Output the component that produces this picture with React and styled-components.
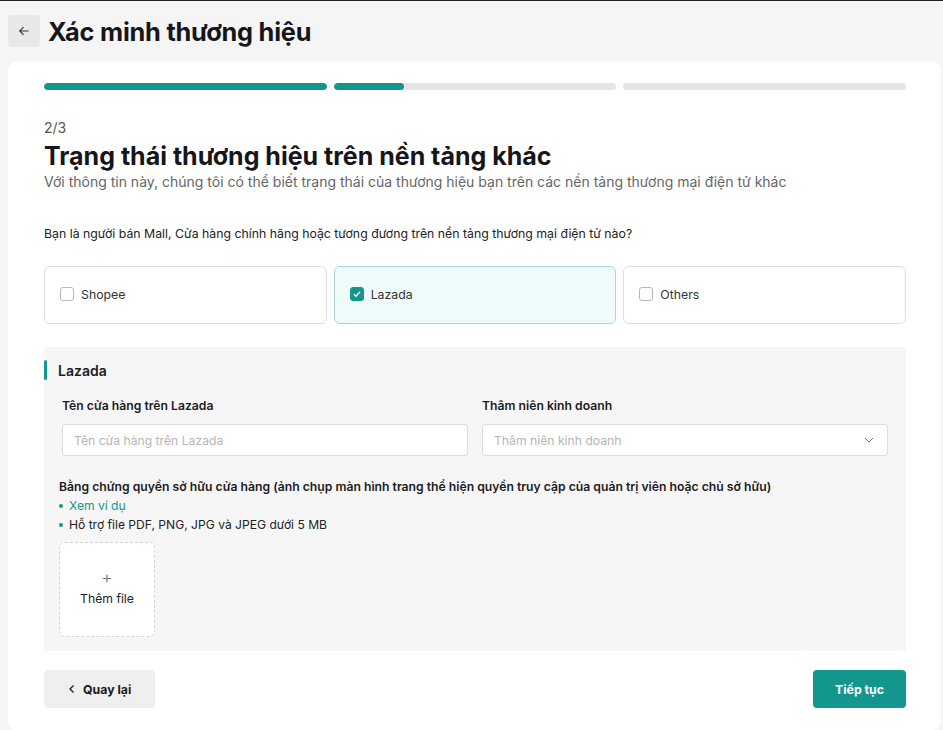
import { useState } from 'react';
import styled, { createGlobalStyle } from 'styled-components';

const GlobalStyle = createGlobalStyle`
    html, body {
        margin: 0;
        padding: 0;
        background: #f5f5f6;
        font-family: Inter, "Noto Sans", sans-serif;
        color: #1c1c1e;
    }
    * { box-sizing: border-box; }
`

const Page = styled.div`
    min-height: 730px;
    border-top: 1px solid #222;
    padding: 14px 2px 0 8px;
    display: flex;
    flex-direction: column;
    gap: 15px;
`
const TopBar = styled.div`
    display: flex;
    align-items: center;
    gap: 8px;
`
const BackButton = styled.button`
    width: 32px;
    height: 32px;
    border: none;
    border-radius: 4px;
    background: #e8e8e8;
    display: flex;
    align-items: center;
    justify-content: center;
    color: #333;
    padding: 0;
    cursor: pointer;
`
const PageTitle = styled.h1`
    margin: 0;
    font-size: 25.3px;
    font-weight: 700;
    letter-spacing: -0.2px;
    color: #16161a;
`
const Card = styled.div`
    background: #fff;
    border-radius: 8px;
    padding: 21px 35px 20px 36px;
    flex: 1;
`
const Steps = styled.div`
    display: grid;
    grid-template-columns: repeat(3, 1fr);
    gap: 7px;
`
const Step = styled.div`
    height: 7px;
    border-radius: 4px;
    background: #e5e5e5;
    overflow: hidden;
`
const StepFill = styled.div`
    height: 100%;
    background: #12968e;
    border-radius: 4px;
`
const StepCount = styled.div`
    margin-top: 29px;
    font-size: 14px;
    color: #555;
    line-height: 18px;
`
const Heading = styled.h2`
    margin: 4px 0 0;
    font-size: 25px;
    font-weight: 700;
    line-height: 31px;
    color: #16161a;
`
const Subtitle = styled.p`
    margin: 1px 0 0;
    font-size: 14px;
    line-height: 18px;
    color: #666;
`
const Question = styled.p`
    margin: 34px 0 0;
    font-size: 12.3px;
    line-height: 18px;
    color: #222;
`
const Options = styled.div`
    margin-top: 23px;
    display: grid;
    grid-template-columns: repeat(3, 1fr);
    gap: 7px;
`
const Option = styled.label`
    height: 58px;
    display: flex;
    align-items: center;
    gap: 7px;
    padding: 0 15px 2px;
    border-radius: 6px;
    border: 1px solid ${p => (p.$checked ? '#a7d6d8' : '#dedede')};
    background: ${p => (p.$checked ? '#effbfb' : '#fff')};
    font-size: 12.3px;
    color: #333;
    cursor: pointer;
`
const Box = styled.span`
    width: 14px;
    height: 14px;
    border-radius: 3px;
    border: 1px solid ${p => (p.$checked ? '#12968e' : '#b8b8b8')};
    background: ${p => (p.$checked ? '#12968e' : '#fff')};
    display: flex;
    align-items: center;
    justify-content: center;
`
const Section = styled.div`
    margin-top: 23px;
    background: #f6f6f6;
    padding: 13px 18px 14px 0;
`
const SectionTitle = styled.div`
    display: flex;
    align-items: center;
    gap: 11px;
    font-size: 14px;
    font-weight: 600;
    color: #1c1c1e;
    height: 20px;

    &::before {
        content: "";
        width: 3px;
        height: 20px;
        border-radius: 2px;
        background: #12968e;
    }
`
const Fields = styled.div`
    margin-top: 18px;
    padding-left: 18px;
    display: grid;
    grid-template-columns: 1fr 1fr;
    gap: 14px;
`
const Field = styled.div`
    display: flex;
    flex-direction: column;
    gap: 10px;
`
const Label = styled.div`
    font-size: 12.2px;
    font-weight: 600;
    color: #1c1c1e;
    line-height: 16px;
`
const Input = styled.input`
    height: 32px;
    border: 1px solid #dcdcdc;
    border-radius: 3px;
    background: #fff;
    padding: 0 11px;
    font-family: inherit;
    font-size: 12.2px;
    outline: none;

    &::placeholder { color: #b5b5b5; }
`
const Select = styled.div`
    height: 32px;
    border: 1px solid #dcdcdc;
    border-radius: 3px;
    background: #fff;
    padding: 0 13px 0 11px;
    display: flex;
    align-items: center;
    justify-content: space-between;
    font-size: 12.2px;
    color: #b5b5b5;
`
const Proof = styled.div`
    margin-top: 23px;
    padding-left: 15px;
`
const Hints = styled.ul`
    margin: 1px 0 0;
    padding: 0;
    list-style: none;
`
const Hint = styled.li`
    display: flex;
    align-items: center;
    gap: 6px;
    font-size: 12.1px;
    line-height: 19px;
    color: ${p => (p.$link ? '#12968e' : '#222')};

    &::before {
        content: "";
        width: 4px;
        height: 4px;
        border-radius: 50%;
        background: #12968e;
    }
`
const Upload = styled.div`
    margin-top: 8px;
    width: 96px;
    height: 95px;
    padding-bottom: 4px;
    border: 1px dashed #d3d3d3;
    border-radius: 6px;
    background: #fff;
    display: flex;
    flex-direction: column;
    align-items: center;
    justify-content: center;
    gap: 6px;
    font-size: 12.2px;
    color: #222;
`
const Plus = styled.span`
    font-size: 18px;
    font-weight: 300;
    color: #777;
    line-height: 15px;
`
const Footer = styled.div`
    margin-top: 19px;
    display: flex;
    justify-content: space-between;
`
const Button = styled.button`
    height: 38px;
    border: none;
    border-radius: 4px;
    padding: 0 ${p => (p.$primary ? '22px' : '24px')};
    background: ${p => (p.$primary ? '#12968e' : '#efefef')};
    color: ${p => (p.$primary ? '#fff' : '#1c1c1e')};
    font-family: inherit;
    font-size: 12.3px;
    font-weight: 700;
    display: flex;
    align-items: center;
    gap: 7px;
    cursor: pointer;
`

const platforms = ['Shopee', 'Lazada', 'Others']

export default function App() {
    const [selected, setSelected] = useState(['Lazada'])

    const toggle = name =>
        setSelected(s => (s.includes(name) ? s.filter(x => x !== name) : [...s, name]))

    return (
        <>
            <GlobalStyle />
            <Page>
                <TopBar>
                    <BackButton>
                        <svg width="12" height="12" viewBox="0 0 12 12" fill="none" stroke="currentColor" strokeWidth="1.1">
                            <path d="M10.5 6H1.8M5.5 2.2L1.7 6l3.8 3.8" />
                        </svg>
                    </BackButton>
                    <PageTitle>Xác minh thương hiệu</PageTitle>
                </TopBar>
                <Card>
                    <Steps>
                        <Step><StepFill style={{ width: '100%' }} /></Step>
                        <Step><StepFill style={{ width: '25%' }} /></Step>
                        <Step />
                    </Steps>
                    <StepCount>2/3</StepCount>
                    <Heading>Trạng thái thương hiệu trên nền tảng khác</Heading>
                    <Subtitle>Với thông tin này, chúng tôi có thể biết trạng thái của thương hiệu bạn trên các nền tảng thương mại điện tử khác</Subtitle>
                    <Question>Bạn là người bán Mall, Cửa hàng chính hãng hoặc tương đương trên nền tảng thương mại điện tử nào?</Question>
                    <Options>
                        {platforms.map(name => {
                            const checked = selected.includes(name)
                            return (
                                <Option key={name} $checked={checked} onClick={() => toggle(name)}>
                                    <Box $checked={checked}>
                                        {checked && (
                                            <svg width="10" height="10" viewBox="0 0 10 10" fill="none" stroke="#fff" strokeWidth="1.4">
                                                <path d="M2 5.2l2 2.1L8 2.8" />
                                            </svg>
                                        )}
                                    </Box>
                                    {name}
                                </Option>
                            )
                        })}
                    </Options>
                    <Section>
                        <SectionTitle>Lazada</SectionTitle>
                        <Fields>
                            <Field>
                                <Label>Tên cửa hàng trên Lazada</Label>
                                <Input placeholder="Tên cửa hàng trên Lazada" />
                            </Field>
                            <Field>
                                <Label>Thâm niên kinh doanh</Label>
                                <Select>
                                    Thâm niên kinh doanh
                                    <svg width="10" height="6" viewBox="0 0 10 6" fill="none" stroke="#777" strokeWidth="1">
                                        <path d="M1 1l4 4 4-4" />
                                    </svg>
                                </Select>
                            </Field>
                        </Fields>
                        <Proof>
                            <Label>Bằng chứng quyền sở hữu cửa hàng (ảnh chụp màn hình trang thể hiện quyền truy cập của quản trị viên hoặc chủ sở hữu)</Label>
                            <Hints>
                                <Hint $link>Xem ví dụ</Hint>
                                <Hint>Hỗ trợ file PDF, PNG, JPG và JPEG dưới 5 MB</Hint>
                            </Hints>
                            <Upload>
                                <Plus>+</Plus>
                                Thêm file
                            </Upload>
                        </Proof>
                    </Section>
                    <Footer>
                        <Button>
                            <svg width="8" height="10" viewBox="0 0 8 10" fill="none" stroke="currentColor" strokeWidth="1.3">
                                <path d="M5.5 1.5L2 5l3.5 3.5" />
                            </svg>
                            Quay lại
                        </Button>
                        <Button $primary>Tiếp tục</Button>
                    </Footer>
                </Card>
            </Page>
        </>
    )
}
